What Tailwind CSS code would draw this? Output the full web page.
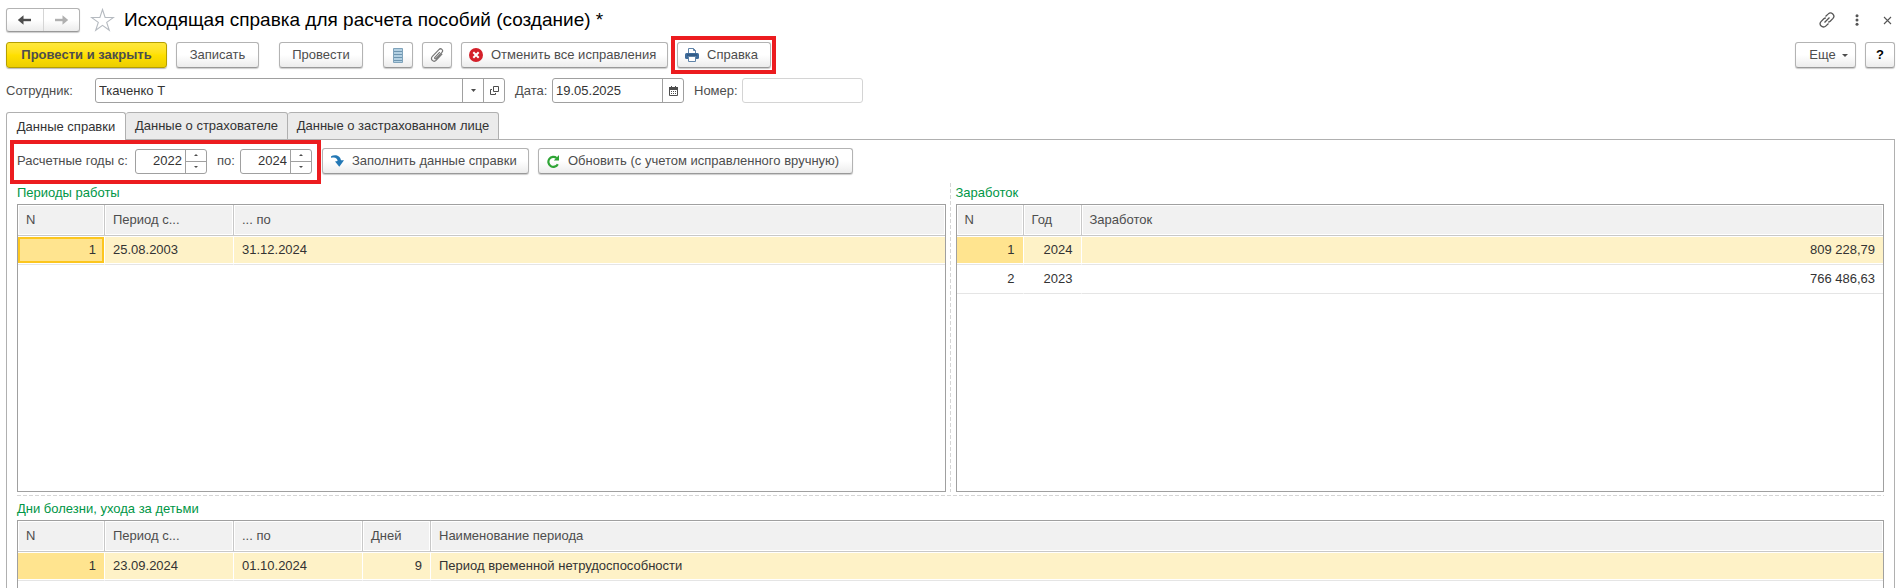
<!DOCTYPE html>
<html lang="ru">
<head>
    <meta charset="UTF-8">
    <meta name="viewport" content="width=device-width, initial-scale=1.0">
    <title>Исходящая справка для расчета пособий</title>
    <script src="https://cdn.jsdelivr.net/npm/@tailwindcss/browser@4"></script>
</head>
<body class="bg-white">

<div class="flex flex-col h-screen overflow-hidden pl-[6px] pr-[3px] pt-2 font-['Liberation_Sans',Arial,sans-serif] text-[13px] leading-4 text-[#4d4d4d]">

    <!-- Заголовок окна -->
    <header class="flex items-center h-6">
        <div class="flex h-6 w-[74px] rounded-[3px] border border-[#b3b3b3] border-b-[#999] bg-linear-to-b from-white from-50% to-[#ececec] shadow-[0_1px_1px_#ccc]">
            <button type="button" aria-label="Назад" class="flex flex-1 items-center justify-center border-r border-[#d5d5d5]">
                <svg width="15" height="12" viewBox="0 0 15 12" fill="none" stroke="#4d4d4d"><path d="M3 6h11" stroke-width="2.4"/><path d="M6.500 1.200v9.600L.8 6z" fill="#4d4d4d" stroke="none"/></svg>
            </button>
            <button type="button" aria-label="Вперед" class="flex flex-1 items-center justify-center">
                <svg width="15" height="12" viewBox="0 0 15 12" fill="none" stroke="#b0b0b0"><path d="M1 6h11" stroke-width="2.4"/><path d="M8.500 1.200v9.600L14.200 6z" fill="#b0b0b0" stroke="none"/></svg>
            </button>
        </div>
        <button type="button" aria-label="Избранное" class="ml-[10px]">
            <svg width="25" height="24" viewBox="0 0 25 24" fill="none" stroke="#b5bac0" stroke-width="1.1"><path d="M12.500 1.500l2.600 8h8.400l-6.800 4.900 2.600 7.900-6.800-4.900-6.800 4.900 2.600-7.900-6.800-4.900h8.400z"/></svg>
        </button>
        <h1 class="ml-[9px] text-[19px] leading-6 text-black">Исходящая справка для расчета пособий (создание) *</h1>
        <div class="ml-auto flex items-center pr-[3px] text-[#555]">
            <button type="button" aria-label="Ссылка">
                <svg width="16" height="16" viewBox="0 0 16 16" fill="none" stroke="#555" stroke-width="1.3"><path d="M6.500 4.500L9.300 1.900c1.200-1.200 3.200-1.200 4.500.1s1.300 3.200.2 4.400L11.200 9.200c-.6.600-1.300.8-2 .8M9.500 11.500l-2.800 2.600c-1.200 1.200-3.200 1.200-4.500-.1s-1.300-3.200-.2-4.400L4.800 6.800c.6-.6 1.300-.8 2-.8M5.500 10.500l5-5"/></svg>
            </button>
            <button type="button" aria-label="Меню" class="ml-5">
                <svg width="4" height="12" viewBox="0 0 4 12" fill="#555"><circle cx="2" cy="1.800" r="1.500"/><circle cx="2" cy="6" r="1.500"/><circle cx="2" cy="10.200" r="1.500"/></svg>
            </button>
            <button type="button" aria-label="Закрыть" class="ml-6">
                <svg width="9" height="9" viewBox="0 0 9 9" stroke="#555" stroke-width="1.1"><path d="M1 1l7 7M8 1l-7 7"/></svg>
            </button>
        </div>
    </header>

    <!-- Командная панель -->
    <div class="flex items-center mt-[10px]">
        <button type="button" class="h-[26px] w-[161px] rounded-[3px] border border-[#b59f00] bg-linear-to-b from-[#ffe83b] via-[#ffe000] to-[#ecce00] font-bold shadow-[0_1px_1px_#bbb]">Провести и закрыть</button>
        <button type="button" class="ml-[9px] h-[26px] w-[83px] rounded-[3px] border border-[#b3b3b3] border-b-[#999] bg-linear-to-b from-white from-50% to-[#ececec] shadow-[0_1px_1px_#ccc]">Записать</button>
        <button type="button" class="ml-5 h-[26px] w-[84px] rounded-[3px] border border-[#b3b3b3] border-b-[#999] bg-linear-to-b from-white from-50% to-[#ececec] shadow-[0_1px_1px_#ccc]">Провести</button>
        <button type="button" aria-label="Движения документа" class="ml-5 flex items-center justify-center h-[26px] w-[30px] rounded-[3px] border border-[#b3b3b3] border-b-[#999] bg-linear-to-b from-white from-50% to-[#ececec] shadow-[0_1px_1px_#ccc]">
            <svg width="10" height="15" viewBox="0 0 10 15"><path d="M.5.5h9v14h-9z" fill="#b3d0e2" stroke="#7fa3bb"/><path d="M1 3.500h8M1 6.500h8M1 9.500h8M1 12.500h8" stroke="#6d95b0"/></svg>
        </button>
        <button type="button" aria-label="Присоединенные файлы" class="ml-[9px] flex items-center justify-center h-[26px] w-[30px] rounded-[3px] border border-[#b3b3b3] border-b-[#999] bg-linear-to-b from-white from-50% to-[#ececec] shadow-[0_1px_1px_#ccc]">
            <svg width="14" height="14" viewBox="0 0 14 14" fill="none" stroke="#777" stroke-width="1.2"><path d="M9.800 4.100L4.900 9.300c-.8.900.4 2 1.200 1.200l5.800-6.100c2-2.200-1-4.900-3-2.800L2.400 8.400c-2.800 3 1.200 6.500 3.900 3.700l5.900-6.200"/></svg>
        </button>
        <button type="button" class="ml-[9px] flex items-center h-[26px] w-[207px] rounded-[3px] border border-[#b3b3b3] border-b-[#999] bg-linear-to-b from-white from-50% to-[#ececec] pl-[7px] shadow-[0_1px_1px_#ccc]">
            <svg class="shrink-0" width="14" height="14" viewBox="0 0 14 14"><circle cx="7" cy="7" r="7" fill="#d4202a"/><path d="M4.300 4.300l5.400 5.400M9.700 4.300l-5.400 5.400" stroke="#fff" stroke-width="2"/></svg>
            <span class="ml-2 whitespace-nowrap">Отменить все исправления</span>
        </button>
        <div class="relative ml-[9px]">
            <button type="button" class="flex items-center h-[26px] w-[94px] rounded-[3px] border border-[#b3b3b3] border-b-[#999] bg-linear-to-b from-white from-50% to-[#ececec] pl-[7px] shadow-[0_1px_1px_#ccc]">
                <svg class="shrink-0" width="14" height="14" viewBox="0 0 14 14"><path d="M3.500 5V.5h5l2 2V5" fill="#fff" stroke="#5f83a8"/><path d="M8.500.5v2h2" fill="none" stroke="#5f83a8"/><rect x="0" y="5" width="14" height="6" rx="1.500" fill="#3f6c9b"/><path d="M2 7h10" stroke="#284d74"/><path d="M3.500 8.500h7v5h-7z" fill="#fff" stroke="#5f83a8"/></svg>
                <span class="ml-2">Справка</span>
            </button>
            <div class="absolute -inset-y-[6px] -left-[6px] -right-[5px] border-4 border-[#ec1c1f] pointer-events-none"></div>
        </div>
        <button type="button" class="ml-auto flex items-center justify-center gap-[6px] h-[26px] w-[61px] rounded-[3px] border border-[#b3b3b3] border-b-[#999] bg-linear-to-b from-white from-50% to-[#ececec] pl-[6px] shadow-[0_1px_1px_#ccc]">Еще
            <svg width="6" height="3" viewBox="0 0 6 3" fill="#4d4d4d"><path d="M0 0h6L3 3z"/></svg>
        </button>
        <button type="button" class="ml-[9px] h-[26px] w-[30px] rounded-[3px] border border-[#b3b3b3] border-b-[#999] bg-linear-to-b from-white from-50% to-[#ececec] font-bold text-black shadow-[0_1px_1px_#ccc]">?</button>
    </div>

    <!-- Шапка документа -->
    <div class="flex items-center mt-[10px]">
        <label for="employee" class="w-[89px]">Сотрудник:</label>
        <div class="flex h-[25px] w-[410px] rounded-[3px] border border-[#a0a0a0]">
            <input id="employee" type="text" value="Ткаченко Т" class="min-w-0 flex-1 pl-[3px] text-[#333] outline-none">
            <button type="button" aria-label="Выбрать из списка" class="flex w-[21px] items-center justify-center border-l border-[#a0a0a0]">
                <svg width="5" height="3" viewBox="0 0 5 3" fill="#4d4d4d"><path d="M0 0h5L2.500 3z"/></svg>
            </button>
            <button type="button" aria-label="Открыть" class="flex w-[21px] items-center justify-center border-l border-[#a0a0a0]">
                <svg width="9" height="9" viewBox="0 0 9 9" fill="none" stroke="#4d4d4d"><path d="M3.500.5h5v5h-5zM2 3.500H.5v5h5V7"/></svg>
            </button>
        </div>
        <label for="date" class="ml-[10px] w-[37px]">Дата:</label>
        <div class="flex h-[25px] w-[132px] rounded-[3px] border border-[#a0a0a0]">
            <input id="date" type="text" value="19.05.2025" class="min-w-0 flex-1 pl-[3px] text-[#333] outline-none">
            <button type="button" aria-label="Календарь" class="flex w-[21px] items-center justify-center border-l border-[#a0a0a0]">
                <svg width="9" height="10" viewBox="0 0 9 10"><path d="M.5 1.500h8v8h-8z" fill="#fff" stroke="#4d4d4d"/><path d="M0 1h9v3H0z" fill="#4d4d4d"/><path d="M2.500 0v2M6.500 0v2" stroke="#4d4d4d"/><path d="M2 5.500h5M2 7.500h5" stroke="#4d4d4d" stroke-dasharray="1 1"/></svg>
            </button>
        </div>
        <label for="number" class="ml-[10px] w-12">Номер:</label>
        <input id="number" type="text" class="h-[25px] w-[121px] rounded-[3px] border border-[#d4d4d4] pl-[3px] outline-none">
    </div>

    <!-- Закладки -->
    <nav class="relative z-10 flex mt-[9px] -mb-px text-[#333]">
        <a href="#" class="flex items-center justify-center h-7 w-[120px] rounded-t-[3px] border border-b-0 border-[#b0b0b0] bg-white">Данные справки</a>
        <a href="#" class="flex items-center justify-center h-7 w-[162px] rounded-t-[3px] border border-l-0 border-[#b0b0b0] bg-[#ebebeb]">Данные о страхователе</a>
        <a href="#" class="flex items-center justify-center h-7 w-[211px] rounded-t-[3px] border border-l-0 border-[#b0b0b0] bg-[#ebebeb]">Данные о застрахованном лице</a>
    </nav>

    <main class="flex flex-col flex-1 min-h-0 border border-b-0 border-[#b0b0b0] px-[10px] pt-2">

        <div class="flex items-center">
            <div class="relative flex items-center">
                <label for="yearFrom" class="w-[118px] whitespace-nowrap">Расчетные годы с:</label>
                <div class="flex h-[25px] w-[72px] rounded-[3px] border border-[#a0a0a0]">
                    <input id="yearFrom" type="text" value="2022" class="min-w-0 flex-1 pr-[3px] text-right text-[#333] outline-none">
                    <div class="flex flex-col w-[21px] border-l border-[#a0a0a0]">
                        <button type="button" aria-label="Больше" class="flex flex-1 items-center justify-center border-b border-[#a0a0a0]"><svg width="4" height="2" viewBox="0 0 4 2" fill="#4d4d4d"><path d="M0 2h4L2 0z"/></svg></button>
                        <button type="button" aria-label="Меньше" class="flex flex-1 items-center justify-center"><svg width="4" height="2" viewBox="0 0 4 2" fill="#4d4d4d"><path d="M0 0h4L2 2z"/></svg></button>
                    </div>
                </div>
                <label for="yearTo" class="ml-[10px] w-[23px]">по:</label>
                <div class="flex h-[25px] w-[72px] rounded-[3px] border border-[#a0a0a0]">
                    <input id="yearTo" type="text" value="2024" class="min-w-0 flex-1 pr-[3px] text-right text-[#333] outline-none">
                    <div class="flex flex-col w-[21px] border-l border-[#a0a0a0]">
                        <button type="button" aria-label="Больше" class="flex flex-1 items-center justify-center border-b border-[#a0a0a0]"><svg width="4" height="2" viewBox="0 0 4 2" fill="#4d4d4d"><path d="M0 2h4L2 0z"/></svg></button>
                        <button type="button" aria-label="Меньше" class="flex flex-1 items-center justify-center"><svg width="4" height="2" viewBox="0 0 4 2" fill="#4d4d4d"><path d="M0 0h4L2 2z"/></svg></button>
                    </div>
                </div>
                <div class="absolute -left-[7px] -right-[9px] -top-[9px] -bottom-[10px] z-20 border-4 border-[#ec1c1f] pointer-events-none"></div>
            </div>
            <button type="button" class="ml-[10px] flex items-center h-[26px] w-[207px] rounded-[3px] border border-[#b3b3b3] border-b-[#999] bg-linear-to-b from-white from-50% to-[#ececec] pl-[8px] shadow-[0_1px_1px_#ccc]">
                <svg class="shrink-0" width="13" height="12" viewBox="0 0 13 12" fill="#2378b5"><path d="M0 1.200C3.500-.8 9.300-.2 10 5.300h3L8.300 11.800 4 6.600l2.600-.6C6.300 3 3.800 1.800.3 2.900z"/></svg>
                <span class="ml-2 whitespace-nowrap">Заполнить данные справки</span>
            </button>
            <button type="button" class="ml-[9px] flex items-center h-[26px] w-[315px] rounded-[3px] border border-[#b3b3b3] border-b-[#999] bg-linear-to-b from-white from-50% to-[#ececec] pl-[8px] shadow-[0_1px_1px_#ccc]">
                <svg class="shrink-0" width="13" height="13" viewBox="0 0 13 13" fill="none" stroke="#2fa536" stroke-width="2.2"><path d="M9.600 3A5 5 0 1 0 10.800 9.200"/><path d="M12 0v5.500H6.800z" fill="#2fa536" stroke="none"/></svg>
                <span class="ml-2 whitespace-nowrap">Обновить (с учетом исправленного вручную)</span>
            </button>
        </div>

        <div class="flex mt-[10px]">
            <section class="flex-1 min-w-0">
                <h2 class="h-5 leading-[18px] text-[#009646]">Периоды работы</h2>
                <div class="h-72 border border-[#a0a0a0]">
                    <table class="w-full table-fixed border-separate border-spacing-0">
                        <thead>
                            <tr class="h-[31px] text-left *:border-b *:border-[#c8c8c8] *:bg-[#f1f1f1] *:px-2 *:font-normal *:shadow-[inset_0_0_0_1px_white]">
                                <th class="w-[87px] border-r">N</th>
                                <th class="w-[129px] border-r">Период с...</th>
                                <th>... по</th>
                            </tr>
                        </thead>
                        <tbody class="text-[#333]">
                            <tr class="h-[29px] *:border-b *:border-b-[#e5e5e5] *:bg-[#fef2c7] *:px-2 *:shadow-[inset_0_1px_white,inset_0_-1px_white]">
                                <td class="relative border-r border-r-white text-right"><div class="absolute inset-x-0 inset-y-px flex items-center justify-end border-2 border-[#fcc61f] bg-[#ffe48f] pr-[6px]">1</div></td>
                                <td class="border-r border-r-white">25.08.2003</td>
                                <td>31.12.2024</td>
                            </tr>
                        </tbody>
                    </table>
                </div>
            </section>

            <div class="-mt-px ml-1 mr-[5px] w-px bg-[repeating-linear-gradient(to_bottom,#d5d5d5_0_4px,transparent_4px_6px)]"></div>

            <section class="flex-1 min-w-0">
                <h2 class="h-5 leading-[18px] text-[#009646]">Заработок</h2>
                <div class="h-72 border border-[#a0a0a0]">
                    <table class="w-full table-fixed border-separate border-spacing-0">
                        <thead>
                            <tr class="h-[31px] text-left *:border-b *:border-[#c8c8c8] *:bg-[#f1f1f1] *:px-2 *:font-normal *:shadow-[inset_0_0_0_1px_white]">
                                <th class="w-[67px] border-r">N</th>
                                <th class="w-[58px] border-r">Год</th>
                                <th>Заработок</th>
                            </tr>
                        </thead>
                        <tbody class="text-right text-[#333]">
                            <tr class="h-[29px] *:border-b *:border-b-[#e5e5e5] *:px-2 *:shadow-[inset_0_1px_white,inset_0_-1px_white]">
                                <td class="border-r border-r-white bg-[#ffe48f]">1</td>
                                <td class="border-r border-r-white bg-[#fef2c7]">2024</td>
                                <td class="bg-[#fef2c7]">809 228,79</td>
                            </tr>
                            <tr class="h-[29px] *:border-b *:border-b-[#e5e5e5] *:px-2">
                                <td class="border-r border-r-white">2</td>
                                <td class="border-r border-r-white">2023</td>
                                <td>766 486,63</td>
                            </tr>
                        </tbody>
                    </table>
                </div>
            </section>
        </div>

        <div class="mt-[3px] h-px shrink-0 bg-[repeating-linear-gradient(to_right,#d5d5d5_0_4px,transparent_4px_6px)]"></div>

        <section class="flex flex-col flex-1 min-h-0 mt-[5px]">
            <h2 class="h-[19px] shrink-0 text-[#009646]">Дни болезни, ухода за детьми</h2>
            <div class="flex-1 min-h-0 border border-b-0 border-[#a0a0a0]">
                <table class="w-full table-fixed border-separate border-spacing-0">
                    <thead>
                        <tr class="h-[31px] text-left *:border-b *:border-[#c8c8c8] *:bg-[#f1f1f1] *:px-2 *:font-normal *:shadow-[inset_0_0_0_1px_white]">
                            <th class="w-[87px] border-r">N</th>
                            <th class="w-[129px] border-r">Период с...</th>
                            <th class="w-[129px] border-r">... по</th>
                            <th class="w-[68px] border-r">Дней</th>
                            <th>Наименование периода</th>
                        </tr>
                    </thead>
                    <tbody class="text-[#333]">
                        <tr class="h-[29px] *:border-b *:border-b-[#e5e5e5] *:px-2 *:shadow-[inset_0_1px_white,inset_0_-1px_white]">
                            <td class="border-r border-r-white bg-[#ffe48f] text-right">1</td>
                            <td class="border-r border-r-white bg-[#fef2c7]">23.09.2024</td>
                            <td class="border-r border-r-white bg-[#fef2c7]">01.10.2024</td>
                            <td class="border-r border-r-white bg-[#fef2c7] text-right">9</td>
                            <td class="bg-[#fef2c7]">Период временной нетрудоспособности</td>
                        </tr>
                    </tbody>
                </table>
            </div>
        </section>
    </main>
</div>

</body>
</html>
